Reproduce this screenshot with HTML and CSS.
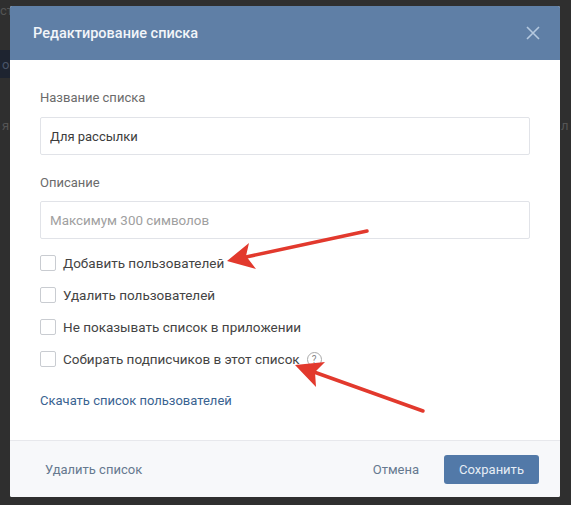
FILE: index.html
```html
<!DOCTYPE html>
<html lang="en">
<head>
    <meta charset="UTF-8">
    <meta name="viewport" content="width=device-width, initial-scale=1.0">
    <title>Редактирование списка</title>
    <link rel="stylesheet" href="styles.css">
</head>
<body>
    <!-- Page behind the dark overlay -->
    <span class="behind behind-top">ст</span>
    <span class="behind behind-nav">о</span>
    <span class="behind behind-left">я</span>
    <span class="behind behind-right">л</span>

    <div class="modal">
        <div class="modal-header">
            <h1>Редактирование списка</h1>
            <svg class="close" width="16" height="16" viewBox="0 0 16 16">
                <path d="M2 2 L14 14 M14 2 L2 14" stroke="#b5c9df" stroke-width="1.6" fill="none"/>
            </svg>
        </div>

        <div class="modal-body">
            <label class="field-label">Название списка</label>
            <input class="field" type="text" value="Для рассылки">

            <label class="field-label second">Описание</label>
            <input class="field" type="text" placeholder="Максимум 300 символов">

            <div class="options">
                <label class="option"><input type="checkbox"><span>Добавить пользователей</span></label>
                <label class="option"><input type="checkbox"><span>Удалить пользователей</span></label>
                <label class="option"><input type="checkbox"><span>Не показывать список в приложении</span></label>
                <label class="option"><input type="checkbox"><span>Собирать подписчиков в этот список</span><span class="hint">?</span></label>
            </div>

            <a class="download" href="#">Скачать список пользователей</a>
        </div>

        <div class="modal-footer">
            <a class="delete" href="#">Удалить список</a>
            <a class="cancel" href="#">Отмена</a>
            <button class="save" type="button">Сохранить</button>
        </div>
    </div>

    <!-- Red arrows drawn over the screenshot -->
    <svg class="arrows" width="571" height="505" viewBox="0 0 571 505">
        <path d="M367 231 L246 257" stroke="#e2392d" stroke-width="3.5" stroke-linecap="round" fill="none"/>
        <path d="M227 261 L249 243 L246 256 L256 269 Z" fill="#e2392d"/>
        <path d="M423 411 L314 372" stroke="#e2392d" stroke-width="3.5" stroke-linecap="round" fill="none"/>
        <path d="M295 365 L325 362 L315 372 L316 387 Z" fill="#e2392d"/>
    </svg>
</body>
</html>
```

FILE: styles.css
```css
* {
    box-sizing: border-box;
}

body {
    margin: 0;
    width: 571px;
    height: 505px;
    padding: 6px 11px 8px 10px;
    overflow: hidden;
    font-family: Roboto, 'Liberation Sans', sans-serif;
    font-size: 13px;
    background-color: #2f2f2f;
    background-image: linear-gradient(#2f2f2f, #2f2f2f), linear-gradient(#1e2430, #1e2430);
    background-size: 100% 6px, 10px 28px;
    background-position: 0 0, 0 50px;
    background-repeat: no-repeat;
    position: relative;
}

.behind {
    position: absolute;
    color: #555;
    font-size: 13px;
}

.behind-top {
    left: 0;
    top: 3px;
}

.behind-nav {
    left: 2px;
    top: 57px;
    color: #4a5568;
}

.behind-left {
    left: 2px;
    top: 118px;
}

.behind-right {
    left: 561px;
    top: 118px;
}

.modal {
    position: relative;
    width: 550px;
    height: 491px;
    display: flex;
    flex-direction: column;
    background-color: #fff;
    border-radius: 2px;
}

.modal-header {
    height: 54px;
    flex: none;
    display: flex;
    align-items: center;
    justify-content: space-between;
    padding: 0 19px 0 23px;
    background-color: #5f7fa6;
    border-radius: 2px 2px 0 0;
}

.modal-header h1 {
    margin: 0;
    font-size: 14.5px;
    font-weight: 500;
    color: #f2f5f9;
}

.modal-body {
    flex: 1;
    padding: 29px 30px 0;
}

.field-label {
    display: block;
    height: 18px;
    line-height: 18px;
    margin-bottom: 10px;
    color: #6b6b6b;
}

.field-label.second {
    margin-top: 19px;
    margin-bottom: 9px;
}

.field {
    display: block;
    width: 490px;
    height: 38px;
    padding: 0 9px;
    border: 1px solid #e1e3e8;
    border-radius: 2px;
    font-family: inherit;
    font-size: 13px;
    color: #3c3c3c;
    outline: none;
}

.field::placeholder {
    font-size: 13.4px;
    color: #a0a0a0;
}

.options {
    margin-top: 16px;
    display: flex;
    flex-direction: column;
    gap: 16px;
}

.option {
    display: flex;
    align-items: center;
    height: 16px;
    font-size: 13.5px;
    color: #444;
}

.option input {
    appearance: none;
    width: 16px;
    height: 16px;
    margin: 0 7px 0 0;
    background-color: #fff;
    border: 1px solid #c9ccd1;
    border-radius: 2px;
}

.hint {
    width: 15px;
    height: 15px;
    margin-left: 7px;
    border: 1px solid #a9a9a9;
    border-radius: 50%;
    font-size: 10px;
    line-height: 13px;
    text-align: center;
    color: #888;
}

.download {
    display: block;
    margin-top: 25px;
    height: 18px;
    line-height: 18px;
    color: #3a6391;
    text-decoration: none;
}

.modal-footer {
    height: 57px;
    flex: none;
    display: flex;
    align-items: center;
    padding: 0 21px 0 35px;
    background-color: #f7f8fa;
    border-top: 1px solid #e7e8ec;
    border-radius: 0 0 2px 2px;
}

.delete {
    margin-right: auto;
    color: #66798f;
    text-decoration: none;
}

.cancel {
    margin-right: 25px;
    color: #66798f;
    text-decoration: none;
}

.save {
    width: 95px;
    height: 29px;
    padding: 0;
    border: 0;
    border-radius: 3px;
    font-family: inherit;
    font-size: 13px;
    color: #e6edf5;
    background-color: #5279a8;
}

.arrows {
    position: absolute;
    left: 0;
    top: 0;
}
```
